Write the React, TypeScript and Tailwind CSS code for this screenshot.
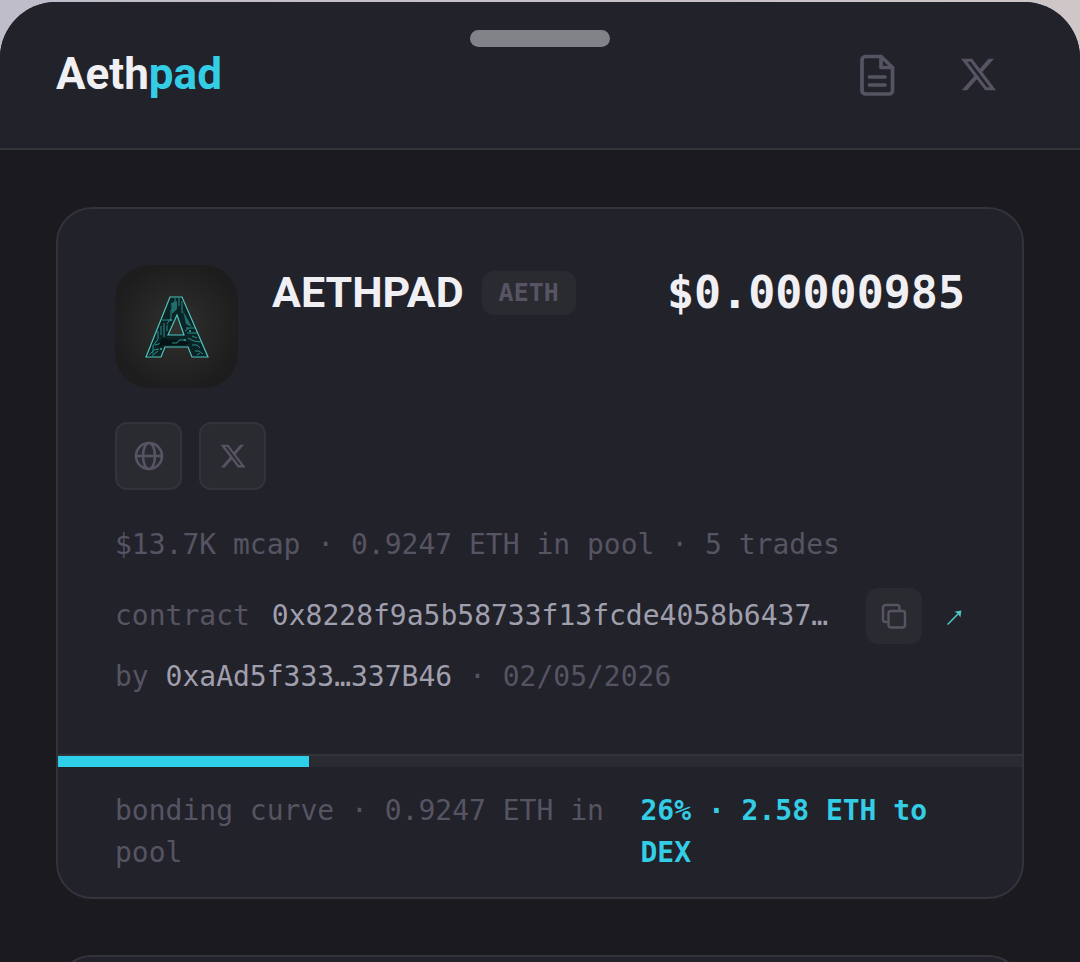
import type { ReactNode } from 'react';

const XIcon = ({ className }: { className: string }) => (
  <svg viewBox="0 0 24 24" fill="currentColor" className={className} aria-hidden="true">
    <path d="M18.244 2.25h3.308l-7.227 8.26 8.502 11.24H16.17l-5.214-6.817L4.99 21.75H1.68l7.73-8.835L1.254 2.25H8.08l4.713 6.231zm-1.161 17.52h1.833L7.084 4.126H5.117z" />
  </svg>
);

const DocIcon = () => (
  <svg viewBox="0 0 36 44" fill="none" stroke="currentColor" strokeWidth="3.7" strokeLinecap="round" strokeLinejoin="round" className="h-11 w-9" aria-hidden="true">
    <path d="M22 4.5H6.5A3.5 3.5 0 0 0 3 8v30.5A3.5 3.5 0 0 0 6.5 42H30a3.5 3.5 0 0 0 3.5-3.5V15.5z" />
    <path d="M22 4.5v11h11.5M10.5 25h15.5M10.5 33h15.5" />
  </svg>
);

const GlobeIcon = () => (
  <svg viewBox="0 0 30 30" fill="none" stroke="currentColor" strokeWidth="2.6" className="size-[30px]" aria-hidden="true">
    <circle cx="15" cy="15" r="13" />
    <ellipse cx="15" cy="15" rx="6" ry="13" />
    <path d="M2 15h26" />
  </svg>
);

const CopyIcon = () => (
  <svg viewBox="0 0 26 26" fill="none" stroke="currentColor" strokeWidth="2.4" strokeLinejoin="round" strokeLinecap="round" className="size-[26px]" aria-hidden="true">
    <rect x="7.5" y="8" width="16.5" height="16.5" rx="2.5" />
    <path d="M6 19H4.5A2.5 2.5 0 0 1 2 16.5V4.5A2.5 2.5 0 0 1 4.5 2h11.5A2.5 2.5 0 0 1 18.5 4.5V7" />
  </svg>
);

const TokenLogo = () => (
  <div className="flex size-[123px] shrink-0 items-center justify-center rounded-[34px] bg-radial from-[#30302f] to-[#1d1d1d] to-75%">
    <svg viewBox="0 0 66 64" className="h-16 w-[66px]" fill="none" role="img" aria-label="AETHPAD logo">
      <path d="M26 2h12l26 60H48l-4-10H21l-4 10H2zM33 20l-9 20h16z" fill="#0b2325" stroke="#4fc4bd" strokeWidth="1.2" fillRule="evenodd" />
      <g stroke="#2d8c88" strokeWidth="1">
        <path d="M31 3v8l-4 4v8l-4 6M35 3v8M38 6v12M18 25h8M20 28v14M17 31v9M23 30v6M14 36v8l-5 7v8M42 33h9M41 36l4-3M43 38h10M44 43l6 3 7 1M48 41l5 2M48 50h5l3 3M51 56h4l4 3M53 60l3-2M5 60l5-5 5-1M8 61l6-5M11 50l7-2" />
      </g>
      <path d="M39 16l9 16-6-3zM27 8l6-2v8l-5 5z" fill="#1f6f6c" />
      <path d="M18 43l8 2 7-1 8 3 5 1-5 2H19l-5 3z" fill="#061315" />
      <path d="M28 48h5l2-3h5" stroke="#2d8c88" />
      <g fill="#3aa9a2">
        <circle cx="27" cy="25" r="1" />
        <circle cx="46" cy="36" r="1" />
        <circle cx="41" cy="45" r="1" />
        <circle cx="17" cy="54" r="1" />
      </g>
    </svg>
  </div>
);

const SocialLink = ({ label, children }: { label: string; children: ReactNode }) => (
  <a href="#" aria-label={label} className="flex h-[68px] w-[67px] items-center justify-center rounded-xl border-2 border-[#33333c] bg-[#2a2a31]">
    {children}
  </a>
);

const progress = 26;

export default function App() {
  return (
    <div className="min-h-screen bg-linear-to-r from-[#bfbdca] to-[#cec6c7] pt-0.5 font-['DejaVu_Sans_Mono',monospace] text-[28px] leading-[42px] text-[#565463]">
      <div className="h-[calc(100vh-2px)] overflow-hidden rounded-t-[56px] bg-[#1b1a1f]">
        <header className="relative flex h-[148px] items-center justify-between border-b-2 border-[#33333c] bg-[#22222a] pr-[82px] pb-0.5 pl-14">
          <div className="absolute top-7 left-1/2 h-[17px] w-[140px] -translate-x-1/2 rounded-full bg-[#818389]" />
          <a href="#" className="font-['Roboto',sans-serif] text-[44px] leading-[48px] font-bold text-[#f0f0f4]">
            Aeth<span className="text-[#33cde5]">pad</span>
          </a>
          <nav className="flex items-center gap-16">
            <a href="#" aria-label="Docs"><DocIcon /></a>
            <a href="#" aria-label="X"><XIcon className="size-[39px]" /></a>
          </nav>
        </header>

        <main className="flex flex-col gap-14 px-14 pt-[57px]">
          <section className="overflow-hidden rounded-[36px] border-2 border-[#33333c] bg-[#22222a]">
            <div className="px-[57px] py-14">
              <div className="flex items-start">
                <TokenLogo />
                <h1 className="ml-[34px] font-['Roboto',sans-serif] text-[43px] leading-[54px] font-bold text-[#f0f0f4]">AETHPAD</h1>
                <span className="mt-1.5 ml-[18px] rounded-xl bg-[#2a2a31] px-[17px] text-[25px] leading-[44px] font-bold">AETH</span>
                <span className="ml-auto pt-0.5 text-[45px] leading-[52px] font-bold text-[#f0f0f4]">$0.00000985</span>
              </div>

              <div className="mt-[34px] flex gap-[17px]">
                <SocialLink label="Website"><GlobeIcon /></SocialLink>
                <SocialLink label="X profile"><XIcon className="size-7" /></SocialLink>
              </div>

              <p className="mt-[34px]">$13.7K mcap · 0.9247 ETH in pool · 5 trades</p>

              <div className="mt-[22px] flex items-center">
                <span>contract</span>
                <span className="ml-[22px] min-w-0 flex-1 truncate text-[#a09fae]">0x8228f9a5b58733f13fcde4058b6437…</span>
                <button type="button" aria-label="Copy contract address" className="flex size-14 shrink-0 items-center justify-center rounded-xl bg-[#2a2a31]">
                  <CopyIcon />
                </button>
                <a href="#" aria-label="View contract" className="mr-0.5 ml-6 pt-0.5 text-[#52c9c8]">
                  <svg viewBox="0 0 16 16" className="size-[17px]" fill="none" aria-hidden="true">
                    <path d="M1.5 14.5L12 4" stroke="currentColor" strokeWidth="1.4" />
                    <path d="M8 2.5l6.5-1-1 6.5-2-3.500z" fill="currentColor" />
                  </svg>
                </a>
              </div>

              <p className="mt-3">
                by <span className="text-[#a09fae]">0xaAd5f333…337B46</span> · 02/05/2026
              </p>
            </div>

            <div className="border-t-2 border-[#33333c]">
              <div className="h-[11px] bg-[#2a2a31]" role="progressbar" aria-label="Bonding curve" aria-valuenow={progress}>
                <div className="h-full bg-[#2dd0e8]" style={{ width: `${progress}%` }} />
              </div>
              <div className="flex justify-between px-[57px] pt-[23px] pb-[23px]">
                <span>bonding curve · 0.9247 ETH in pool</span>
                <span className="font-bold text-[#33cde5]">{`${progress}% · 2.58 ETH to DEX`}</span>
              </div>
            </div>
          </section>

          <section className="h-40 rounded-[36px] border-2 border-[#33333c] bg-[#22222a]" />
        </main>
      </div>
    </div>
  );
}
